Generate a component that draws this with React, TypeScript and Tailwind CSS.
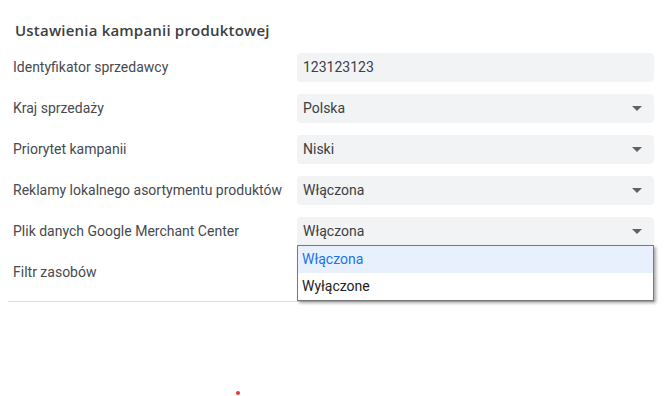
import React from 'react'

const fields = [
  { label: 'Identyfikator sprzedawcy', value: '123123123', select: false },
  { label: 'Kraj sprzedaży', value: 'Polska', select: true },
  { label: 'Priorytet kampanii', value: 'Niski', select: true },
  { label: 'Reklamy lokalnego asortymentu produktów', value: 'Włączona', select: true },
  { label: 'Plik danych Google Merchant Center', value: 'Włączona', select: true, open: true },
  { label: 'Filtr zasobów', value: '', select: false },
]

function Caret() {
  return (
    <svg width="10" height="5" viewBox="0 0 10 5" className="shrink-0">
      <path d="M0 0h10L5 5z" fill="#5f6368" />
    </svg>
  )
}

export default function App() {
  return (
    <div className="relative w-[665px] h-[396px] bg-white font-['Roboto',sans-serif] overflow-hidden">
      <div className="ml-[8px] w-[646px] pt-[20px]">
        <h2 className="pl-[7px] font-['Open_Sans',sans-serif] text-[15px] leading-[20px] font-semibold tracking-[0.2px] text-[#3c4043]">
          Ustawienia kampanii produktowej
        </h2>

        <div className="mt-[13px] flex flex-col gap-[12px] border-b border-[#dadce0] pb-[14px]">
          {fields.map((f) => (
            <div key={f.label} className="flex items-center h-[29px]">
              <div className="w-[289px] pl-[5px] text-[14px] text-[#474a4e] whitespace-nowrap">{f.label}</div>
              <div className="relative flex-1 h-[29px]">
                {f.value !== '' && (
                  <div className="flex items-center justify-between h-full rounded-[4px] bg-[#f1f3f4] pl-[6px] pr-[12px] text-[14px] text-[#3c4043]">
                    <span>{f.value}</span>
                    {f.select && <Caret />}
                  </div>
                )}
                {f.open && (
                  <div className="absolute left-0 right-0 top-[28px] z-10 border border-[#7a7a7a] bg-white shadow-[2px_2px_3px_rgba(0,0,0,0.35)]">
                    <div className="h-[27px] flex items-center pl-[4px] bg-[#e8f0fe] text-[14px] text-[#1a73e8]">Włączona</div>
                    <div className="h-[27px] flex items-center pl-[4px] text-[14px] text-[#202124]">Wyłączone</div>
                  </div>
                )}
              </div>
            </div>
          ))}
        </div>
      </div>

      <div className="absolute left-[236px] top-[391px] w-[4px] h-[4px] rounded-full bg-[#e53935]" />
    </div>
  )
}
